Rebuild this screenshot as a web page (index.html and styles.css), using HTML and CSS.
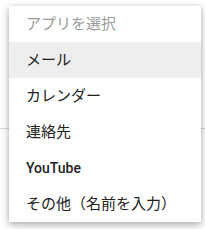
FILE: index.html
```html
<!DOCTYPE html>
<html lang="ja">
<head>
<meta charset="utf-8">
<link rel="stylesheet" href="styles.css">
</head>
<body>
<div class="page">
  <div class="menu">
    <div class="item header">アプリを選択</div>
    <div class="item active">メール</div>
    <div class="item">カレンダー</div>
    <div class="item">連絡先</div>
    <div class="item bold">YouTube</div>
    <div class="item">その他（名前を入力）</div>
  </div>
</div>
</body>
</html>
```
FILE: styles.css
```css
html, body {
  margin: 0;
  padding: 0;
}
body {
  width: 205px;
  height: 229px;
  background: #ffffff linear-gradient(#d6d6d6, #d6d6d6) 0 128px / 100% 1px no-repeat;
  font-family: Roboto, "Noto Sans CJK JP", sans-serif;
}
.page {
  padding: 6px 4px 0 9px;
}
.menu {
  background: #fff;
  width: 192px;
  box-shadow: 0 3px 8px rgba(0, 0, 0, 0.3), 0 0 4px rgba(0, 0, 0, 0.1);
  display: flex;
  flex-direction: column;
}
.item {
  height: 36px;
  line-height: 37px;
  padding-left: 17px;
  font-size: 15px;
  color: #222;
  white-space: nowrap;
}
.header {
  color: #9a9a9a;
}
.active {
  background: #eeeeee;
}
.bold {
  font-weight: 500;
  font-size: 14px;
}
```
